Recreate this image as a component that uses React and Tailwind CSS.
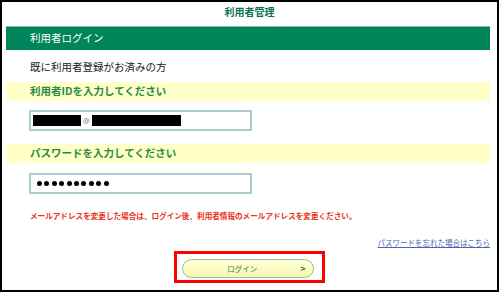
import React from 'react';

const jp = { fontFamily: '"Noto Sans CJK JP", "Noto Sans", sans-serif' };

const Band = ({ children }) => (
    <div className="h-[19px] bg-[#ffffc8] flex items-center pl-[24px] text-[10.5px] font-bold text-[#2a8a4a] leading-none">
        {children}
    </div>
);

const Field = ({ children }) => (
    <div className="ml-[23px] w-[223px] h-[21px] border-2 border-[#a9cdc4] bg-white flex items-center pl-[2px]">
        {children}
    </div>
);

const App = () => {
    return (
        <div className="w-[499px] h-[292px] border-2 border-black bg-white overflow-hidden" style={jp}>
            <div className="h-[24px] flex items-center justify-center text-[10px] font-bold text-[#0a7150] leading-none pb-[4px]">
                利用者管理
            </div>

            <div className="ml-[4px] w-[484px]">
                <div className="h-[24px] bg-[#00845a] border-t border-[#7fbfa5] flex items-center pl-[24px] text-[10.5px] text-white leading-none">
                    利用者ログイン
                </div>

                <div className="h-[32px] flex items-center pl-[24px] pt-[2px] text-[10.5px] text-[#222] leading-none">
                    既に利用者登録がお済みの方
                </div>

                <Band>利用者IDを入力してください</Band>

                <div className="pt-[9px] pb-[13px]">
                    <Field>
                        <div className="w-[48px] h-[11px] bg-black" />
                        <span className="text-[7px] text-gray-500 mx-[2px] leading-none">@</span>
                        <div className="w-[89px] h-[11px] bg-black" />
                    </Field>
                </div>

                <Band>パスワードを入力してください</Band>

                <div className="pt-[10px]">
                    <Field>
                        <div className="flex gap-[2.4px] pl-[4px]">
                            {Array.from({ length: 10 }).map((_, i) => (
                                <span key={i} className="w-[5px] h-[5px] rounded-full bg-black" />
                            ))}
                        </div>
                    </Field>
                </div>

                <div className="h-[42px] flex items-center pl-[24px] pt-[2px] text-[7.6px] font-bold text-[#e8321a] leading-none">
                    メールアドレスを変更した場合は、ログイン後、利用者情報のメールアドレスを変更ください。
                </div>

                <div className="h-[14px] flex items-center justify-end text-[7.5px] leading-none">
                    <a className="text-[#4d62ad] underline">パスワードを忘れた場合はこちら</a>
                </div>

                <div className="flex justify-center pt-[1px] pl-[2px]">
                    <div className="w-[151px] h-[32px] border-[3px] border-[#f00] pl-[5px] pt-[5px]">
                        <button className="w-[132px] h-[19px] rounded-full border border-[#8cc49a] bg-gradient-to-b from-[#ffffd8] to-[#fbf6b0] flex items-center text-[7.5px] text-[#2f7a4a] leading-none">
                            <span className="flex-1 text-center pl-[2px]">ログイン</span>
                            <span className="pr-[7px] text-[9px] font-bold">&gt;</span>
                        </button>
                    </div>
                </div>
            </div>
        </div>
    );
};

export default App;
